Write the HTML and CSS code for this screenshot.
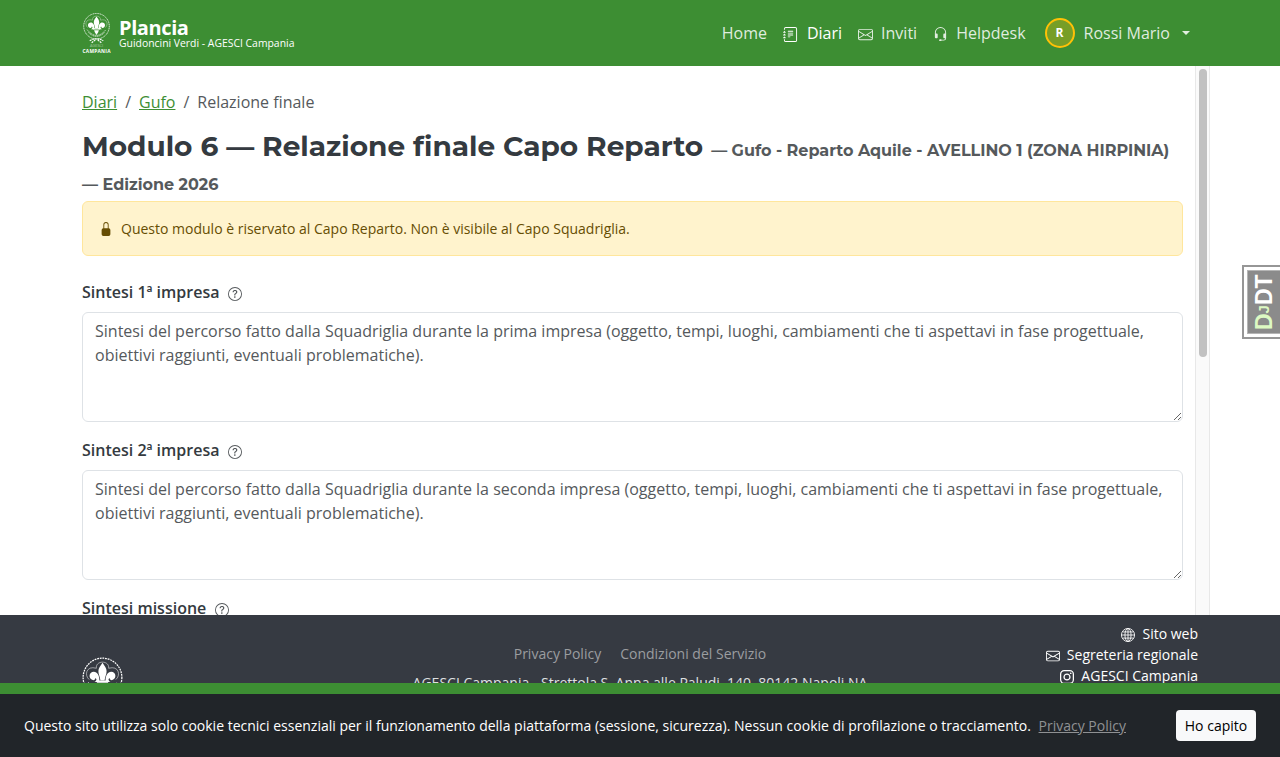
FILE: index.html
```html
<!DOCTYPE html>
<html lang="it">
<head>
    <meta charset="UTF-8">
    <meta name="viewport" content="width=device-width, initial-scale=1.0">
    <title>Plancia - Relazione finale</title>
    <link rel="stylesheet" href="styles.css">
</head>
<body>
    <!-- Shared icons -->
    <svg class="sprite" xmlns="http://www.w3.org/2000/svg">
        <symbol id="journal" viewBox="0 0 16 16">
            <path d="M5 10.5a.5.5 0 0 1 .5-.5h2a.5.5 0 0 1 0 1h-2a.5.5 0 0 1-.5-.5zm0-2a.5.5 0 0 1 .5-.5h5a.5.5 0 0 1 0 1h-5a.5.5 0 0 1-.5-.5zm0-2a.5.5 0 0 1 .5-.5h5a.5.5 0 0 1 0 1h-5a.5.5 0 0 1-.5-.5zm0-2a.5.5 0 0 1 .5-.5h5a.5.5 0 0 1 0 1h-5a.5.5 0 0 1-.5-.5z"/>
            <path d="M3 0h10a2 2 0 0 1 2 2v12a2 2 0 0 1-2 2H3a2 2 0 0 1-2-2v-1h1v1a1 1 0 0 0 1 1h10a1 1 0 0 0 1-1V2a1 1 0 0 0-1-1H3a1 1 0 0 0-1 1v1H1V2a2 2 0 0 1 2-2z"/>
            <path d="M1 5v-.5a.5.5 0 0 1 1 0V5h.5a.5.5 0 0 1 0 1h-2a.5.5 0 0 1 0-1H1zm0 3v-.5a.5.5 0 0 1 1 0V8h.5a.5.5 0 0 1 0 1h-2a.5.5 0 0 1 0-1H1zm0 3v-.5a.5.5 0 0 1 1 0v.5h.5a.5.5 0 0 1 0 1h-2a.5.5 0 0 1 0-1H1z"/>
        </symbol>
        <symbol id="envelope" viewBox="0 0 16 16">
            <path d="M0 4a2 2 0 0 1 2-2h12a2 2 0 0 1 2 2v8a2 2 0 0 1-2 2H2a2 2 0 0 1-2-2V4Zm2-1a1 1 0 0 0-1 1v.217l7 4.2 7-4.2V4a1 1 0 0 0-1-1H2Zm13 2.383-4.708 2.825L15 11.105V5.383Zm-.034 6.876-5.64-3.471L8 9.583l-1.326-.795-5.64 3.47A1 1 0 0 0 2 13h12a1 1 0 0 0 .966-.741ZM1 11.105l4.708-2.897L1 5.383v5.722Z"/>
        </symbol>
        <symbol id="headset" viewBox="0 0 16 16">
            <path d="M8 1a5 5 0 0 0-5 5v1h1a1 1 0 0 1 1 1v3a1 1 0 0 1-1 1H3a1 1 0 0 1-1-1V6a6 6 0 1 1 12 0v6a2.5 2.5 0 0 1-2.5 2.5H9.366a1 1 0 0 1-.866.5h-1a1 1 0 1 1 0-2h1a1 1 0 0 1 .866.5H11.5A1.5 1.5 0 0 0 13 12h-1a1 1 0 0 1-1-1V8a1 1 0 0 1 1-1h1V6a5 5 0 0 0-5-5z"/>
        </symbol>
        <symbol id="question" viewBox="0 0 16 16">
            <path d="M8 15A7 7 0 1 1 8 1a7 7 0 0 1 0 14zm0 1A8 8 0 1 0 8 0a8 8 0 0 0 0 16z"/>
            <path d="M5.255 5.786a.237.237 0 0 0 .241.247h.825c.138 0 .248-.113.266-.25.09-.656.54-1.134 1.342-1.134.686 0 1.314.343 1.314 1.168 0 .635-.374.927-.965 1.371-.673.489-1.206 1.06-1.168 1.987l.003.217a.25.25 0 0 0 .25.246h.811a.25.25 0 0 0 .25-.25v-.105c0-.718.273-.927 1.01-1.486.609-.463 1.244-.977 1.244-2.056 0-1.511-1.276-2.241-2.673-2.241-1.267 0-2.655.59-2.75 2.286zm1.557 5.763c0 .533.425.927 1.01.927.609 0 1.028-.394 1.028-.927 0-.552-.42-.94-1.029-.94-.584 0-1.009.388-1.009.94z"/>
        </symbol>
        <symbol id="lock" viewBox="0 0 16 16">
            <path d="M8 1a2 2 0 0 1 2 2v4H6V3a2 2 0 0 1 2-2zm3 6V3a3 3 0 0 0-6 0v4a2 2 0 0 0-2 2v5a2 2 0 0 0 2 2h6a2 2 0 0 0 2-2V9a2 2 0 0 0-2-2z"/>
        </symbol>
        <symbol id="globe" viewBox="0 0 16 16">
            <g fill="none" stroke="currentColor">
                <circle cx="8" cy="8" r="7.5"/>
                <ellipse cx="8" cy="8" rx="3.5" ry="7.5"/>
                <path d="M8 .5v15M.5 8h15M1.7 4.5h12.6M1.7 11.5h12.6"/>
            </g>
        </symbol>
        <symbol id="instagram" viewBox="0 0 16 16">
            <g fill="none" stroke="currentColor" stroke-width="1.44">
                <rect x=".72" y=".72" width="14.56" height="14.56" rx="4"/>
                <circle cx="8" cy="8" r="3.4"/>
            </g>
            <circle cx="12.27" cy="3.73" r=".96"/>
        </symbol>
        <symbol id="emblem" viewBox="0 0 40 40">
            <g fill="none" stroke="currentColor">
                <circle cx="20" cy="20" r="18.9" stroke-width="1.2" stroke-dasharray="1.8 .8"/>
                <path d="M14 11C13 3 27 3 26 11C36 8 38 18 33 22M14 11C4 8 2 18 7 22" stroke-width=".5"/>
                <path d="M6 25q14 17 28 0M8 29q12 12 24 0" stroke-width="1" stroke-dasharray="2 .8"/>
            </g>
            <path d="M20 5.5c-2 3-4 5-4 8.500 0 3 1.500 5 2 9h4c.5-4 2-6 2-9 0-3.500-2-5.500-4-8.500z"/>
            <path d="M17 23c0-5-2-8.500-5.500-8.500-5 0-5.500 7-1 8 1.500.3 2.500-.5 2.500-2 2 1 1 3-1 4h5zM23 23c0-5 2-8.500 5.500-8.500 5 0 5.500 7 1 8-1.500.3-2.500-.5-2.500-2-2 1-1 3 1 4h-5z"/>
            <path d="M14.500 23h11v2h-11zM16.500 26h7l-1 3-2.500 4-2.500-4z"/>
        </symbol>
    </svg>

    <header class="navbar">
        <div class="container navbar-inner">
            <a class="brand" href="#">
                <svg class="brand-logo" viewBox="0 0 30 42" fill="currentColor">
                    <use href="#emblem" x="1" y="0" width="28" height="28"/>
                    <path d="M8 29q7-4 14 0M10 31l4-3M20 31l-4-3" fill="none" stroke="currentColor" stroke-width="1.200" stroke-dasharray="2 .7"/>
                    <text x="15" y="36" font-size="4" text-anchor="middle" opacity=".5">AGESCI</text>
                    <text x="15" y="41.500" font-size="5" font-weight="700" text-anchor="middle" textLength="29">CAMPANIA</text>
                </svg>
                <span class="brand-text">
                    <span class="brand-name">Plancia</span>
                    <span class="brand-sub">Guidoncini Verdi - AGESCI Campania</span>
                </span>
            </a>
            <nav class="nav">
                <a class="nav-link" href="#">Home</a>
                <a class="nav-link active" href="#"><svg class="icon"><use href="#journal"/></svg>Diari</a>
                <a class="nav-link" href="#"><svg class="icon"><use href="#envelope"/></svg>Inviti</a>
                <a class="nav-link" href="#"><svg class="icon"><use href="#headset"/></svg>Helpdesk</a>
                <a class="nav-link user" href="#"><span class="avatar">R</span>Rossi Mario<span class="caret"></span></a>
            </nav>
        </div>
    </header>

    <div class="scroller">
        <main class="content">
            <nav class="breadcrumb">
                <a href="#">Diari</a><span>/</span><a href="#">Gufo</a><span>/</span><span class="current">Relazione finale</span>
            </nav>
            <h1>Modulo 6 — Relazione finale Capo Reparto <small>— Gufo - Reparto Aquile - AVELLINO 1 (ZONA HIRPINIA) <span class="edition">— Edizione 2026</span></small></h1>
            <div class="alert"><svg class="icon"><use href="#lock"/></svg>Questo modulo è riservato al Capo Reparto. Non è visibile al Capo Squadriglia.</div>

            <div class="field">
                <label for="impresa1">Sintesi 1ª impresa <svg class="icon"><use href="#question"/></svg></label>
                <textarea id="impresa1" placeholder="Sintesi del percorso fatto dalla Squadriglia durante la prima impresa (oggetto, tempi, luoghi, cambiamenti che ti aspettavi in fase progettuale, obiettivi raggiunti, eventuali problematiche)."></textarea>
            </div>
            <div class="field">
                <label for="impresa2">Sintesi 2ª impresa <svg class="icon"><use href="#question"/></svg></label>
                <textarea id="impresa2" placeholder="Sintesi del percorso fatto dalla Squadriglia durante la seconda impresa (oggetto, tempi, luoghi, cambiamenti che ti aspettavi in fase progettuale, obiettivi raggiunti, eventuali problematiche)."></textarea>
            </div>
            <div class="field">
                <label>Sintesi missione <svg class="icon"><use href="#question"/></svg></label>
            </div>
        </main>
        <div class="scrollbar"><div class="thumb"></div></div>
    </div>

    <footer class="footer">
        <div class="container footer-inner">
            <div class="footer-logo"><svg><use href="#emblem"/></svg></div>
            <div class="footer-center">
                <div class="footer-links"><a href="#">Privacy Policy</a><a href="#">Condizioni del Servizio</a></div>
                <div class="address">AGESCI Campania - Strettola S. Anna alle Paludi, 140, 80142 Napoli NA</div>
            </div>
            <div class="footer-contacts">
                <a href="#"><svg class="icon"><use href="#globe"/></svg>Sito web</a>
                <a href="#"><svg class="icon"><use href="#envelope"/></svg>Segreteria regionale</a>
                <a href="#"><svg class="icon"><use href="#instagram"/></svg>AGESCI Campania</a>
            </div>
        </div>
    </footer>
    <div class="green-strip"></div>

    <div class="cookie-bar">
        <div>Questo sito utilizza solo cookie tecnici essenziali per il funzionamento della piattaforma (sessione, sicurezza). Nessun cookie di profilazione o tracciamento. <a href="#">Privacy Policy</a></div>
        <button>Ho capito</button>
    </div>

    <div class="debug-handle"><div class="debug-label"><span class="dj">D<small>J</small></span>DT</div></div>
</body>
</html>
```
FILE: styles.css
```css
* {
    box-sizing: border-box;
}

body {
    margin: 0;
    height: 757px;
    display: flex;
    flex-direction: column;
    overflow: hidden;
    position: relative;
    font-family: "Open Sans", "Noto Sans", sans-serif;
    font-size: 16px;
    line-height: 24px;
    color: #343a40;
    background: #fff;
}

a {
    color: inherit;
    text-decoration: none;
}

.sprite {
    display: none;
}

.icon {
    width: 14px;
    height: 14px;
    fill: currentColor;
    flex: none;
}

.container {
    width: 1140px;
    margin: 0 auto;
    padding: 0 12px;
}

/* Navbar */
.navbar {
    flex: none;
    height: 66px;
    background: #3d8e33;
    color: #fff;
}

.navbar-inner {
    height: 66px;
    display: flex;
    align-items: center;
    justify-content: space-between;
}

.brand {
    display: flex;
    align-items: center;
    gap: 8px;
}

.brand-logo {
    width: 29px;
    height: 42px;
}

.brand-text {
    display: flex;
    flex-direction: column;
}

.brand-name {
    font-size: 20px;
    font-weight: 700;
    letter-spacing: -0.4px;
    line-height: 20px;
}

.brand-sub {
    font-size: 10.4px;
    line-height: 11px;
}

.nav {
    display: flex;
    align-items: center;
    gap: 16px;
    padding-right: 8px;
}

.nav-link {
    display: flex;
    align-items: center;
    color: rgba(255, 255, 255, 0.85);
}

.nav-link.active {
    color: #fff;
}

.nav-link .icon {
    margin: 2px 8px 0 0;
    width: 15px;
    height: 15px;
}

.nav-link.active .icon {
    margin-right: 9px;
}

.nav-link.user {
    margin-left: 3px;
}

.avatar {
    width: 30px;
    height: 30px;
    margin-right: 9px;
    border: 2px solid #ffc107;
    border-radius: 50%;
    background: #779e27;
    color: #fff;
    font-size: 12px;
    font-weight: 700;
    line-height: 26px;
    text-align: center;
}

.caret {
    margin-left: 12px;
    border: 4px solid transparent;
    border-top-color: currentColor;
    border-bottom: 0;
}

/* Page body */
.scroller {
    flex: 1;
    min-height: 0;
    width: 1140px;
    margin: 0 auto;
    display: flex;
    overflow: hidden;
}

.content {
    flex: 1;
    padding: 24px 12px 0;
}

.breadcrumb {
    display: flex;
    gap: 8px;
    margin-bottom: 16px;
    color: #55595c;
}

.breadcrumb a {
    color: #3d8e33;
    text-decoration: underline;
}

h1 {
    margin: 0;
    font-family: "Montserrat", "Inter", sans-serif;
    font-size: 28px;
    font-weight: 700;
    line-height: 33.600px;
    white-space: nowrap;
}

h1 small {
    font-size: 16px;
    letter-spacing: -0.02px;
    color: #55595c;
}

.edition {
    display: block;
}

.alert {
    height: 55px;
    margin-bottom: 24px;
    padding: 0 16px;
    display: flex;
    align-items: center;
    border: 1px solid #ffe69c;
    border-radius: 6px;
    background: #fff3cd;
    color: #664d03;
    font-size: 14px;
}

.alert .icon {
    margin-right: 8px;
}

.field {
    margin-bottom: 16px;
}

.field label {
    display: flex;
    align-items: center;
    margin-bottom: 8px;
    font-weight: 600;
}

.field label .icon {
    margin: 4px 0 0 9px;
    color: #55595c;
}

textarea {
    display: block;
    width: 100%;
    height: 110px;
    padding: 6px 12px;
    border: 1px solid #dee2e6;
    border-radius: 6px;
    font: inherit;
    resize: vertical;
}

textarea::placeholder {
    color: #55595c;
}

.scrollbar {
    width: 15px;
    padding: 3px;
    border-left: 1px solid #e8e8e8;
    border-right: 1px solid #e8e8e8;
    background: #fafafa;
}

.thumb {
    width: 8px;
    height: 288px;
    border-radius: 4px;
    background: #c1c1c1;
}

/* Footer */
.footer {
    flex: none;
    height: 68px;
    overflow: hidden;
    background: #363a42;
    color: #fff;
    font-size: 14px;
    line-height: 21px;
}

.footer-inner {
    display: grid;
    grid-template-columns: 1fr 460px 1fr;
}

.footer-logo {
    padding-top: 42px;
}

.footer-logo svg {
    display: block;
    width: 41px;
    height: 41px;
    fill: currentColor;
}

.footer-center {
    padding-top: 28px;
    text-align: center;
    white-space: nowrap;
}

.footer-links {
    display: flex;
    justify-content: center;
    gap: 19px;
    margin-bottom: 8px;
    color: #9b9da0;
}

.address {
    color: #dfe0e1;
}

.footer-contacts {
    padding-top: 8px;
    display: flex;
    flex-direction: column;
    align-items: flex-end;
}

.footer-contacts a {
    display: flex;
    align-items: center;
}

.footer-contacts .icon {
    margin: 3px 7px 0 0;
}

.green-strip {
    flex: none;
    height: 11px;
    background: #3d8e33;
}

/* Cookie notice */
.cookie-bar {
    flex: none;
    height: 63px;
    padding: 0 24px;
    display: flex;
    align-items: center;
    justify-content: space-between;
    background: #212529;
    color: #fff;
    font-size: 14px;
}

.cookie-bar a {
    margin-left: 4px;
    color: #8f9193;
    text-decoration: underline;
}

.cookie-bar button {
    width: 80px;
    height: 31px;
    padding: 0;
    border: 0;
    border-radius: 4px;
    background: #f8f9fa;
    color: #000;
    font: inherit;
}

/* Debug toolbar handle, floats over the page */
.debug-handle {
    position: absolute;
    top: 265px;
    right: 0;
    width: 38px;
    height: 74px;
    padding: 3px 0 3px 3px;
    border: 2px solid #969696;
    border-right: 0;
    background: #fff;
}

.debug-label {
    height: 64px;
    border: 1px solid #b5b5b5;
    border-left: 0;
    background: #8b8b8b;
    color: #fff;
    font-family: "Liberation Sans", sans-serif;
    font-size: 23px;
    font-weight: 700;
    line-height: 32px;
    text-align: center;
    writing-mode: vertical-rl;
    transform: rotate(180deg);
}

.dj {
    color: #ddf9c3;
}

.dj small {
    font-size: 15px;
}
```
